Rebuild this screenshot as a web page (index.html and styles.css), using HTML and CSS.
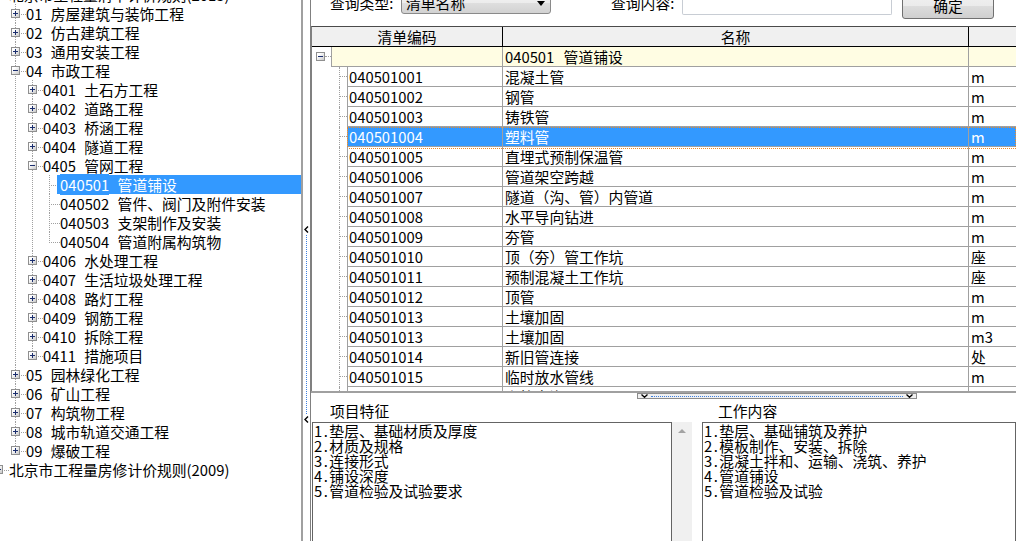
FILE: index.html
```html
<!DOCTYPE html>
<html lang="zh-CN">
<head>
<meta charset="utf-8">
<title>清单查询</title>
<link rel="stylesheet" href="styles.css">
</head>
<body>
<div class="app">
  <aside class="left">
    <ul class="tree">
      <li>
        <div class="row"><span class="tw minus"></span><span class="lbl">北京市工程量清单计价规则(2013)</span></div>
        <ul>
          <li><div class="row"><span class="tw plus"></span><span class="lbl"><span class="c">01</span> 房屋建筑与装饰工程</span></div></li>
          <li><div class="row"><span class="tw plus"></span><span class="lbl"><span class="c">02</span> 仿古建筑工程</span></div></li>
          <li><div class="row"><span class="tw plus"></span><span class="lbl"><span class="c">03</span> 通用安装工程</span></div></li>
          <li>
            <div class="row"><span class="tw minus"></span><span class="lbl"><span class="c">04</span> 市政工程</span></div>
            <ul>
              <li><div class="row"><span class="tw plus"></span><span class="lbl"><span class="c">0401</span> 土石方工程</span></div></li>
              <li><div class="row"><span class="tw plus"></span><span class="lbl"><span class="c">0402</span> 道路工程</span></div></li>
              <li><div class="row"><span class="tw plus"></span><span class="lbl"><span class="c">0403</span> 桥涵工程</span></div></li>
              <li><div class="row"><span class="tw plus"></span><span class="lbl"><span class="c">0404</span> 隧道工程</span></div></li>
              <li>
                <div class="row"><span class="tw minus"></span><span class="lbl"><span class="c">0405</span> 管网工程</span></div>
                <ul>
                  <li><div class="row sel"><span class="lbl"><span class="c">040501</span> 管道铺设</span></div></li>
                  <li><div class="row"><span class="lbl"><span class="c">040502</span> 管件、阀门及附件安装</span></div></li>
                  <li><div class="row"><span class="lbl"><span class="c">040503</span> 支架制作及安装</span></div></li>
                  <li><div class="row"><span class="lbl"><span class="c">040504</span> 管道附属构筑物</span></div></li>
                </ul>
              </li>
              <li><div class="row"><span class="tw plus"></span><span class="lbl"><span class="c">0406</span> 水处理工程</span></div></li>
              <li><div class="row"><span class="tw plus"></span><span class="lbl"><span class="c">0407</span> 生活垃圾处理工程</span></div></li>
              <li><div class="row"><span class="tw plus"></span><span class="lbl"><span class="c">0408</span> 路灯工程</span></div></li>
              <li><div class="row"><span class="tw plus"></span><span class="lbl"><span class="c">0409</span> 钢筋工程</span></div></li>
              <li><div class="row"><span class="tw plus"></span><span class="lbl"><span class="c">0410</span> 拆除工程</span></div></li>
              <li><div class="row"><span class="tw plus"></span><span class="lbl"><span class="c">0411</span> 措施项目</span></div></li>
            </ul>
          </li>
          <li><div class="row"><span class="tw plus"></span><span class="lbl"><span class="c">05</span> 园林绿化工程</span></div></li>
          <li><div class="row"><span class="tw plus"></span><span class="lbl"><span class="c">06</span> 矿山工程</span></div></li>
          <li><div class="row"><span class="tw plus"></span><span class="lbl"><span class="c">07</span> 构筑物工程</span></div></li>
          <li><div class="row"><span class="tw plus"></span><span class="lbl"><span class="c">08</span> 城市轨道交通工程</span></div></li>
          <li><div class="row"><span class="tw plus"></span><span class="lbl"><span class="c">09</span> 爆破工程</span></div></li>
        </ul>
      </li>
      <li><div class="row"><span class="tw plus"></span><span class="lbl">北京市工程量房修计价规则(2009)</span></div></li>
    </ul>
  </aside>

  <div class="vsplit">
    <div class="vbtn">
      <svg class="chev" width="5" height="7" viewBox="0 0 5 7"><polyline points="4,0.5 1,3.5 4,6.5" fill="none" stroke="#000" stroke-width="1.4"/></svg>
      <span class="vdots"></span>
      <svg class="chev" width="5" height="7" viewBox="0 0 5 7"><polyline points="4,0.5 1,3.5 4,6.5" fill="none" stroke="#000" stroke-width="1.4"/></svg>
    </div>
  </div>

  <main class="right">
    <div class="toolbar">
      <span class="tlabel">查询类型:</span>
      <div class="select"><span>清单名称</span><span class="arrow"></span></div>
      <span class="tlabel tlabel2">查询内容:</span>
      <div class="input"></div>
      <div class="btn">确定</div>
    </div>

    <div class="grid">
      <div class="ghead"><div class="h code">清单编码</div><div class="h name">名称</div><div class="h unit"></div></div>
      <div class="grow group"><div class="gt"><span class="tw minus"></span></div><div class="c code"></div><div class="c name"><span class="gc">040501</span> 管道铺设</div><div class="c unit"></div></div>
      <div class="grow data"><div class="gt"></div><div class="c code">040501001</div><div class="c name">混凝土管</div><div class="c unit">m</div></div>
      <div class="grow data"><div class="gt"></div><div class="c code">040501002</div><div class="c name">钢管</div><div class="c unit">m</div></div>
      <div class="grow data"><div class="gt"></div><div class="c code">040501003</div><div class="c name">铸铁管</div><div class="c unit">m</div></div>
      <div class="grow data sel"><div class="gt"></div><div class="c code">040501004</div><div class="c name">塑料管</div><div class="c unit">m</div></div>
      <div class="grow data"><div class="gt"></div><div class="c code">040501005</div><div class="c name">直埋式预制保温管</div><div class="c unit">m</div></div>
      <div class="grow data"><div class="gt"></div><div class="c code">040501006</div><div class="c name">管道架空跨越</div><div class="c unit">m</div></div>
      <div class="grow data"><div class="gt"></div><div class="c code">040501007</div><div class="c name">隧道（沟、管）内管道</div><div class="c unit">m</div></div>
      <div class="grow data"><div class="gt"></div><div class="c code">040501008</div><div class="c name">水平导向钻进</div><div class="c unit">m</div></div>
      <div class="grow data"><div class="gt"></div><div class="c code">040501009</div><div class="c name">夯管</div><div class="c unit">m</div></div>
      <div class="grow data"><div class="gt"></div><div class="c code">040501010</div><div class="c name">顶（夯）管工作坑</div><div class="c unit">座</div></div>
      <div class="grow data"><div class="gt"></div><div class="c code">040501011</div><div class="c name">预制混凝土工作坑</div><div class="c unit">座</div></div>
      <div class="grow data"><div class="gt"></div><div class="c code">040501012</div><div class="c name">顶管</div><div class="c unit">m</div></div>
      <div class="grow data"><div class="gt"></div><div class="c code">040501013</div><div class="c name">土壤加固</div><div class="c unit">m</div></div>
      <div class="grow data"><div class="gt"></div><div class="c code">040501013</div><div class="c name">土壤加固</div><div class="c unit">m3</div></div>
      <div class="grow data"><div class="gt"></div><div class="c code">040501014</div><div class="c name">新旧管连接</div><div class="c unit">处</div></div>
      <div class="grow data"><div class="gt"></div><div class="c code">040501015</div><div class="c name">临时放水管线</div><div class="c unit">m</div></div>
      <div class="grow data"><div class="gt"></div><div class="c code">040501016</div><div class="c name">砌筑方沟</div><div class="c unit">m</div></div>
    </div>

    <div class="hsplit">
      <div class="hbtn">
        <svg width="7" height="4" viewBox="0 0 7 4"><polyline points="0.5,0.5 3.5,3.3 6.5,0.5" fill="none" stroke="#000" stroke-width="1.3"/></svg>
        <span class="hdots"></span>
        <svg width="7" height="4" viewBox="0 0 7 4"><polyline points="0.5,0.5 3.5,3.3 6.5,0.5" fill="none" stroke="#000" stroke-width="1.3"/></svg>
      </div>
    </div>

    <div class="labels">
      <span class="lab1">项目特征</span>
      <span class="lab2">工作内容</span>
    </div>

    <div class="texts">
      <div class="ta ta1"><div><span class="n">1.</span>垫层、基础材质及厚度</div><div><span class="n">2.</span>材质及规格</div><div><span class="n">3.</span>连接形式</div><div><span class="n">4.</span>铺设深度</div><div><span class="n">5.</span>管道检验及试验要求</div></div>
      <div class="sb"><span class="uparrow"></span></div>
      <div class="gap"></div>
      <div class="ta ta2"><div><span class="n">1.</span>垫层、基础铺筑及养护</div><div><span class="n">2.</span>模板制作、安装、拆除</div><div><span class="n">3.</span>混凝土拌和、运输、浇筑、养护</div><div><span class="n">4.</span>管道铺设</div><div><span class="n">5.</span>管道检验及试验</div></div>
    </div>
  </main>
</div>
</body>
</html>
```

FILE: styles.css
```css
* { box-sizing: border-box; }
html, body { margin: 0; padding: 0; background: #fff; }
body {
  font-family: "Noto Sans CJK SC", "Noto Sans", sans-serif;
  font-size: 14.8px;
  color: #000;
}

.app {
  display: flex;
  width: 1016px;
  height: 541px;
  overflow: hidden;
}

/* ---------- left tree ---------- */
.left {
  width: 303px;
  flex: none;
  border-right: 2px solid #a0a0a0;
  overflow: hidden;
}
.tree, .tree ul { list-style: none; margin: 0; padding: 0; }
.tree { margin: -15px 0 0 -2px; }
.tree ul { padding-left: 17px; }
.tree li { position: relative; }
.tree li::before {
  content: "";
  position: absolute;
  left: 0; top: 0;
  width: 10px; height: 10px;
  border-left: 1px dotted #a0a0a0;
  border-bottom: 1px dotted #a0a0a0;
}
.tree li::after {
  content: "";
  position: absolute;
  left: 0; top: 10px; bottom: 0;
  border-left: 1px dotted #a0a0a0;
}
.tree li:last-child::after { display: none; }

.row {
  position: relative;
  display: flex;
  height: 19px;
  line-height: 19px;
  padding-left: 11px;
  white-space: nowrap;
}
.row .c { margin-right: 5px; }
.row.sel .lbl {
  flex: 1;
  margin-left: -3px;
  padding-left: 3px;
  background: #3399ff;
  color: #fff;
}

.tw {
  position: absolute;
  left: -4px; top: 5px;
  width: 9px; height: 9px;
  border: 1px solid #8f8f8f;
  background: linear-gradient(135deg, #ffffff 25%, #c9c9c9 100%);
  z-index: 1;
}
.tw::before {
  content: "";
  position: absolute;
  left: 1px; top: 3px;
  width: 5px; height: 1px;
  background: #1b2e6e;
}
.tw.plus::after {
  content: "";
  position: absolute;
  left: 3px; top: 1px;
  width: 1px; height: 5px;
  background: #1b2e6e;
}

/* ---------- vertical splitter ---------- */
.vsplit { width: 7px; flex: none; }
.vbtn {
  margin-top: 226px;
  height: 197px;
  display: flex;
  flex-direction: column;
  align-items: center;
}
.chev { display: block; flex: none; }
.vdots {
  flex: 1;
  margin: 2px 0;
  border-left: 1px dotted #3c7fe0;
}

/* ---------- right panel ---------- */
.right {
  flex: 1;
  min-width: 0;
  display: flex;
  flex-direction: column;
  border-left: 1px solid #808080;
  overflow: hidden;
}

.toolbar {
  flex: none;
  height: 26px;
  display: flex;
  align-items: flex-start;
  padding-left: 19px;
}
.tlabel {
  width: 71px;
  flex: none;
  margin-top: -7px;
  line-height: 19px;
  white-space: nowrap;
}
.tlabel2 { margin-left: 60px; }
.select {
  width: 150px;
  height: 22px;
  flex: none;
  margin-top: -8px;
  padding: 0 5px 0 4px;
  display: flex;
  align-items: center;
  justify-content: space-between;
  line-height: 20px;
  border: 1px solid #8a8a8a;
  border-radius: 3px;
  background: linear-gradient(#f4f4f4 0%, #ececec 50%, #dedede 51%, #d2d2d2 100%);
}
.arrow {
  width: 0; height: 0;
  border-left: 4px solid transparent;
  border-right: 4px solid transparent;
  border-top: 5px solid #000;
}
.input {
  width: 210px;
  height: 22px;
  flex: none;
  margin-top: -7px;
  border: 1px solid #c8cdd4;
  border-top-color: #abadb3;
  border-radius: 2px;
  background: #fff;
}
.btn {
  width: 92px;
  height: 27px;
  flex: none;
  margin: -8px 0 0 10px;
  border: 1px solid #707070;
  border-radius: 3px;
  background: linear-gradient(#f2f2f2 0%, #ebebeb 50%, #dddddd 51%, #cfcfcf 100%);
  text-align: center;
  line-height: 25px;
}

/* ---------- grid ---------- */
.grid {
  flex: none;
  height: 365px;
  border-top: 1px solid #4a4a4a;
  border-left: 1px solid #808080;
  overflow: hidden;
}
.ghead {
  display: flex;
  height: 20px;
  background: #f0f0f0;
  border-bottom: 1px solid #000;
}
.ghead .h { line-height: 19px; text-align: center; flex: none; }
.h.code { width: 191px; border-right: 1px solid #000; }
.h.name { width: 466px; border-right: 1px solid #000; }
.h.unit { flex: 1; }

.grow {
  position: relative;
  display: flex;
  height: 20px;
}
.gt { flex: none; width: 35px; position: relative; }
.group .gt { width: 19px; }
.group .gt .tw { left: 4px; }
.group .gt::after {
  content: "";
  position: absolute;
  left: 13px; top: 9px;
  width: 6px;
  border-top: 1px dotted #a0a0a0;
}
.data .gt::before {
  content: "";
  position: absolute;
  left: 27px; top: 0; bottom: 0;
  border-left: 1px dotted #a0a0a0;
}
.data .gt::after {
  content: "";
  position: absolute;
  left: 28px; top: 9px;
  width: 7px;
  border-top: 1px dotted #a0a0a0;
}

.grow .c {
  flex: none;
  height: 20px;
  line-height: 19px;
  border-bottom: 1px solid #a0a0a0;
  white-space: nowrap;
  overflow: hidden;
}
.c.code {
  width: 156px;
  padding-left: 1px;
  border-left: 1px solid #a0a0a0;
  border-right: 1px solid #a0a0a0;
}
.group .c.code { width: 172px; }
.c.name { width: 466px; padding-left: 2px; border-right: 1px solid #a0a0a0; }
.grow .c.unit { flex: 1; padding-left: 2px; }
.group .c { background: #fffde3; }
.gc { margin-right: 6px; }
.sel .c { background: #3399ff; color: #fff; }
.grow.sel::after {
  content: "";
  position: absolute;
  left: 35px; right: 0; top: 0;
  height: 20px;
  border: 1px dotted #f08c28;
}

/* ---------- horizontal splitter ---------- */
.hsplit {
  flex: none;
  height: 8px;
  border-top: 2px solid #a0a0a0;
}
.hbtn {
  margin-left: 326px;
  width: 280px;
  height: 6px;
  padding: 0 3px;
  display: flex;
  align-items: center;
  border: 1px solid #8c8c8c;
  background: #f0f0f0;
}
.hbtn svg { display: block; flex: none; }
.hdots {
  flex: 1;
  margin: 0 3px;
  border-top: 1px dotted #3c7fe0;
}

/* ---------- bottom ---------- */
.labels {
  flex: none;
  height: 23px;
  display: flex;
  line-height: 23px;
}
.lab1 { margin-left: 19px; width: 388px; }

.texts {
  flex: 1;
  min-height: 0;
  display: flex;
}
.ta {
  border: 1px solid #646464;
  border-bottom: none;
  padding: 0 1px;
  line-height: 15px;
  white-space: nowrap;
  overflow: hidden;
}
.ta > div { height: 15px; }
.ta .n { letter-spacing: 1.5px; }
.ta1 { margin-left: 1px; width: 360px; flex: none; }
.sb { width: 20px; flex: none; background: #f0f0f0; padding: 7px 0 0 6px; }
.uparrow {
  display: block;
  width: 0; height: 0;
  border-left: 4px solid transparent;
  border-right: 4px solid transparent;
  border-bottom: 4px solid #a3a3a3;
}
.gap { width: 10px; flex: none; }
.ta2 { flex: 1; }
```
